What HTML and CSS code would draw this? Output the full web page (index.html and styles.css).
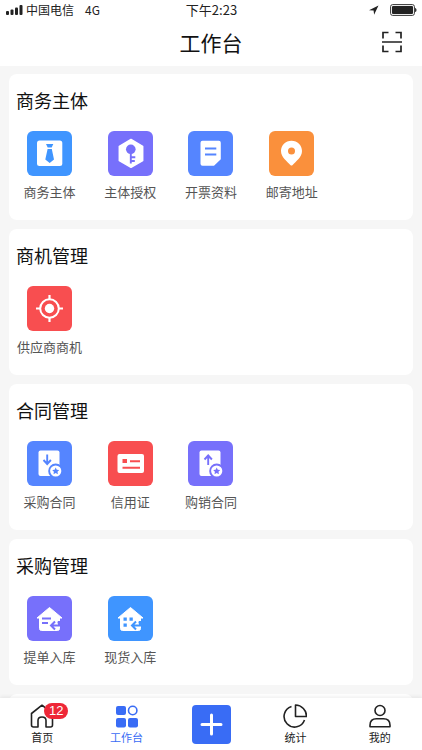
FILE: index.html
```html
<!DOCTYPE html>
<html lang="zh-CN">
<head>
    <meta charset="UTF-8">
    <meta name="viewport" content="width=device-width, initial-scale=1.0">
    <title>工作台</title>
    <link rel="stylesheet" href="styles.css">
</head>
<body>
    <header class="header">
        <div class="status-bar">
            <div class="status-left">
                <svg class="signal" width="17" height="10" viewBox="0 0 17 10" fill="#222">
                    <rect x="0" y="6" width="3" height="4" rx="1"/>
                    <rect x="4.5" y="4.500" width="3" height="5.500" rx="1"/>
                    <rect x="9" y="2.500" width="3" height="7.500" rx="1"/>
                    <rect x="13.500" y="0" width="3" height="10" rx="1"/>
                </svg>
                <span>中国电信</span>
                <span class="network">4G</span>
            </div>
            <div class="status-time">下午2:23</div>
            <div class="status-right">
                <svg width="10" height="10" viewBox="0 0 10 10"><path d="M9.500 .5L0 5.200l4.600.3.500 4.300z" fill="#222"/></svg>
                <svg width="27" height="12" viewBox="0 0 27 12">
                    <rect x=".6" y=".6" width="23.800" height="10.800" rx="2" fill="none" stroke="#333"/>
                    <rect x="2" y="2" width="21" height="8" rx="1" fill="#222"/>
                    <path d="M25 4c2 0 2 4 0 4z" fill="#333"/>
                </svg>
            </div>
        </div>
        <div class="nav-bar">
            <h1>工作台</h1>
            <button class="scan" type="button" aria-label="扫一扫">
                <svg width="22" height="22" viewBox="0 0 22 22" fill="none" stroke="#222" stroke-width="1.700">
                    <path d="M2 7.500V1.500h5.500M14.500 1.500H20v6M2 14.500v6h5.500M14.500 20.500H20v-6M1 11h20"/>
                </svg>
            </button>
        </div>
    </header>

    <main class="content">
        <section class="card">
            <h2>商务主体</h2>
            <div class="menu">
                <a class="menu-item" href="#">
                    <svg class="icon sky" viewBox="0 0 45 45">
                        <rect x="10" y="9.500" width="25.300" height="25.500" rx="2.500" fill="#fff"/>
                        <path d="M19 13h7.300l-1.600 3.500h-4zM20.600 18h4.200l2.200 10.500-4.300 3.500-4.400-3.500z" fill="currentColor"/>
                    </svg>
                    <span>商务主体</span>
                </a>
                <a class="menu-item" href="#">
                    <svg class="icon violet" viewBox="0 0 45 45">
                        <path d="M23 8.500l11.700 6.800v14.200L23 36.300l-11.700-6.800V15.300z" fill="#fff" stroke="#fff" stroke-width="1.500" stroke-linejoin="round"/>
                        <circle cx="22.800" cy="18.300" r="4.800" fill="currentColor"/>
                        <path d="M22.800 21v11.500M22.800 26.300h4.500M22.800 30h4" fill="none" stroke="currentColor" stroke-width="1.900"/>
                    </svg>
                    <span>主体授权</span>
                </a>
                <a class="menu-item" href="#">
                    <svg class="icon blue" viewBox="0 0 45 45">
                        <path d="M14.500 9.800h16.300a2 2 0 0 1 2 2v16.400L26 34.800H14.500a2 2 0 0 1-2-2v-21a2 2 0 0 1 2-2z" fill="#fff"/>
                        <path d="M17 17.600h11.300M17 23.500h11.300" stroke="currentColor" stroke-width="2"/>
                    </svg>
                    <span>开票资料</span>
                </a>
                <a class="menu-item" href="#">
                    <svg class="icon orange" viewBox="0 0 45 45">
                        <path d="M22.500 9.800c6 0 10.500 4.500 10.500 10.200 0 6.200-6 10.200-9.600 14.200q-.9.800-1.800 0C18 30.200 12 26.200 12 20c0-5.700 4.500-10.200 10.500-10.200z" fill="#fff"/>
                        <circle cx="22.500" cy="20" r="3.500" fill="currentColor"/>
                    </svg>
                    <span>邮寄地址</span>
                </a>
            </div>
        </section>

        <section class="card">
            <h2>商机管理</h2>
            <div class="menu">
                <a class="menu-item" href="#">
                    <svg class="icon red" viewBox="0 0 45 45">
                        <circle cx="22.500" cy="22.500" r="9.300" fill="none" stroke="#fff" stroke-width="2"/>
                        <circle cx="22.500" cy="22.500" r="4.700" fill="#fff"/>
                        <path d="M22.500 9v5M22.500 31v5M9 22.500h5M31 22.500h5" stroke="#fff" stroke-width="2.200"/>
                    </svg>
                    <span>供应商商机</span>
                </a>
            </div>
        </section>

        <section class="card">
            <h2>合同管理</h2>
            <div class="menu">
                <a class="menu-item" href="#">
                    <svg class="icon blue" viewBox="0 0 45 45">
                        <rect x="11.500" y="9.500" width="21" height="25.500" rx="2" fill="#fff"/>
                        <path d="M20.200 13.500v9M16.500 19l3.700 4 3.700-4" fill="none" stroke="currentColor" stroke-width="1.900"/>
                        <circle cx="28.700" cy="30" r="7.500" fill="currentColor"/>
                        <circle cx="28.700" cy="30" r="5.600" fill="#fff"/>
                        <path d="M28.700 26.500l1.100 2.200 2.400.4-1.700 1.700.4 2.500-2.200-1.200-2.200 1.200.4-2.500-1.700-1.700 2.400-.4z" fill="currentColor"/>
                    </svg>
                    <span>采购合同</span>
                </a>
                <a class="menu-item" href="#">
                    <svg class="icon red" viewBox="0 0 45 45">
                        <rect x="9.500" y="13" width="26.500" height="19" rx="2" fill="#fff"/>
                        <path d="M14.500 18h4.500v4h-4.500z" fill="currentColor"/>
                        <path d="M22 20.300h10M14.500 26.800H32" stroke="currentColor" stroke-width="2"/>
                    </svg>
                    <span>信用证</span>
                </a>
                <a class="menu-item" href="#">
                    <svg class="icon violet" viewBox="0 0 45 45">
                        <rect x="11.500" y="9.500" width="21" height="25.500" rx="2" fill="#fff"/>
                        <path d="M20.200 24v-9M16.500 18.500l3.700-4 3.700 4" fill="none" stroke="currentColor" stroke-width="1.900"/>
                        <circle cx="28.700" cy="30" r="7.500" fill="currentColor"/>
                        <circle cx="28.700" cy="30" r="5.600" fill="#fff"/>
                        <path d="M28.700 26.500l1.100 2.200 2.400.4-1.700 1.700.4 2.500-2.200-1.200-2.200 1.200.4-2.500-1.700-1.700 2.400-.4z" fill="currentColor"/>
                    </svg>
                    <span>购销合同</span>
                </a>
            </div>
        </section>

        <section class="card">
            <h2>采购管理</h2>
            <div class="menu">
                <a class="menu-item" href="#">
                    <svg class="icon violet" viewBox="0 0 45 45">
                        <path d="M22.500 11.500L35 22h-2.500v3H30v3h2.500v4.500a2 2 0 0 1-2 2h-16a2 2 0 0 1-2-2V22H10z" fill="#fff" stroke="#fff" stroke-linejoin="round"/>
                        <path d="M15 22.500h9M15 27h6" stroke="currentColor" stroke-width="2"/>
                        <path d="M32 25v4.500h-7.500M28 25.500l-4 4 4 4" fill="none" stroke="currentColor" stroke-width="2"/>
                    </svg>
                    <span>提单入库</span>
                </a>
                <a class="menu-item" href="#">
                    <svg class="icon sky" viewBox="0 0 45 45">
                        <path d="M22.500 11.500L35 22h-2.500v3H30v3h2.500v4.500a2 2 0 0 1-2 2h-16a2 2 0 0 1-2-2V22H10z" fill="#fff" stroke="#fff" stroke-linejoin="round"/>
                        <path d="M15.500 21.500h3.300v3.300h-3.300zM21.500 21.500h3.300v3.300h-3.300zM15.500 27.500h3.300v3.300h-3.300z" fill="currentColor"/>
                        <path d="M32 25v4.500h-7.500M28 25.500l-4 4 4 4" fill="none" stroke="currentColor" stroke-width="2"/>
                    </svg>
                    <span>现货入库</span>
                </a>
            </div>
        </section>

        <section class="card"></section>
    </main>

    <nav class="tab-bar">
        <a class="tab" href="#">
            <span class="tab-icon">
                <svg width="24" height="24" viewBox="0 0 24 24" fill="none" stroke="#222" stroke-width="1.600" stroke-linejoin="round">
                    <path d="M1.500 9.500L12 1.200l10.500 8.300V21a2 2 0 0 1-2 2H16v-6.500q0-3.500-4-3.500t-4 3.500V23H3.500a2 2 0 0 1-2-2z"/>
                </svg>
                <span class="badge">12</span>
            </span>
            <span>首页</span>
        </a>
        <a class="tab active" href="#">
            <span class="tab-icon">
                <svg width="24" height="24" viewBox="0 0 24 24" fill="currentColor">
                    <rect x="1" y="2" width="10" height="9" rx="2"/>
                    <circle cx="17.700" cy="6.500" r="4.200" fill="none" stroke="currentColor" stroke-width="1.600"/>
                    <rect x="1" y="14" width="10" height="9.500" rx="2"/>
                    <rect x="13" y="14" width="10" height="9.500" rx="2"/>
                </svg>
            </span>
            <span>工作台</span>
        </a>
        <div class="tab">
            <button class="add" type="button" aria-label="新增">
                <svg width="23" height="23" viewBox="0 0 23 23" stroke="#fff" stroke-width="3" stroke-linecap="round">
                    <path d="M11.500 2v19M2 11.500h19"/>
                </svg>
            </button>
        </div>
        <a class="tab" href="#">
            <span class="tab-icon">
                <svg width="24" height="24" viewBox="0 0 24 24" fill="none" stroke="#222" stroke-width="1.600" stroke-linejoin="round">
                    <path d="M8.500 2.500A10.500 10.500 0 1 0 21.500 16"/>
                    <path d="M12.500 1v11.500h11A11.300 11.300 0 0 0 12.500 1z"/>
                </svg>
            </span>
            <span>统计</span>
        </a>
        <a class="tab" href="#">
            <span class="tab-icon">
                <svg width="24" height="24" viewBox="0 0 24 24" fill="none" stroke="#222" stroke-width="1.600" stroke-linejoin="round">
                    <circle cx="12" cy="6.500" r="5"/>
                    <path d="M2 22.800v-1.500q0-6.500 6.500-6.500h7q6.500 0 6.500 6.500v1.500z"/>
                </svg>
            </span>
            <span>我的</span>
        </a>
    </nav>
</body>
</html>
```

FILE: styles.css
```css
* {
    box-sizing: border-box;
}
body {
    display: flex;
    flex-direction: column;
    height: 100vh;
    margin: 0;
    font-family: "Noto Sans CJK SC", sans-serif;
    color: #222;
    background-color: #f6f6f6;
}
a {
    color: inherit;
    text-decoration: none;
}
button {
    padding: 0;
    border: none;
    background: none;
    cursor: pointer;
}
svg {
    display: block;
}
h1, h2 {
    margin: 0;
    font-weight: 400;
    color: #111;
}

/* header */
.header {
    flex: none;
    background-color: #fff;
}
.status-bar {
    display: grid;
    grid-template-columns: 1fr auto 1fr;
    align-items: center;
    height: 20px;
    padding: 0 5px 0 6px;
    font-size: 12px;
    line-height: 20px;
}
.status-left,
.status-right {
    display: flex;
    align-items: center;
}
.status-left {
    gap: 3px;
}
.network {
    margin-left: 8px;
}
.status-time {
    font-size: 13px;
}
.status-right {
    justify-content: flex-end;
    gap: 11px;
}
.nav-bar {
    display: grid;
    grid-template-columns: 1fr auto 1fr;
    align-items: center;
    height: 46px;
    padding: 0 19px 2px;
}
.nav-bar h1 {
    grid-column: 2;
    font-size: 21px;
    line-height: 30px;
}
.scan {
    justify-self: end;
}

/* cards */
.content {
    flex: 1;
    min-height: 0;
    padding: 8px 9px 0;
    overflow-y: auto;
    scrollbar-width: none;
}
.card {
    min-height: 146px;
    margin-bottom: 9px;
    padding: 14px 0 18px;
    border-radius: 8px;
    background-color: #fff;
}
.card h2 {
    padding: 0 7px;
    font-size: 18px;
    line-height: 24px;
}
.menu {
    display: grid;
    grid-template-columns: repeat(5, 1fr);
    margin-top: 19px;
}
.menu-item {
    display: flex;
    flex-direction: column;
    align-items: center;
    gap: 6px;
    font-size: 13px;
    line-height: 20px;
    color: #555;
    white-space: nowrap;
}
.icon {
    width: 45px;
    height: 45px;
    border-radius: 6px;
}
.sky {
    color: #3f95ff;
    background-color: #3f95ff;
}
.violet {
    color: #7770fb;
    background-color: #7770fb;
}
.blue {
    color: #5585ff;
    background-color: #5585ff;
}
.orange {
    color: #fa903c;
    background-color: #fa903c;
}
.red {
    color: #f84e50;
    background-color: #f84e50;
}

/* bottom tabs */
.tab-bar {
    position: relative;
    display: flex;
    flex: none;
    height: 52px;
    background-color: #fff;
    box-shadow: 0 -1px 4px rgba(0, 0, 0, 0.08);
}
.tab {
    display: flex;
    flex: 1;
    flex-direction: column;
    align-items: center;
    justify-content: center;
    gap: 1px;
    font-size: 11px;
    line-height: 16px;
}
.tab.active {
    color: #396cf5;
}
.tab-icon {
    position: relative;
}
.badge {
    position: absolute;
    top: -1px;
    left: 14px;
    width: 24px;
    border-radius: 8px;
    background-color: #ee2737;
    color: #fff;
    font-family: "Liberation Sans", Arial, sans-serif;
    font-size: 13px;
    line-height: 16px;
    text-align: center;
}
.add {
    display: flex;
    align-items: center;
    justify-content: center;
    width: 39px;
    height: 39px;
    border-radius: 4px;
    background-color: #396cf5;
}
```
